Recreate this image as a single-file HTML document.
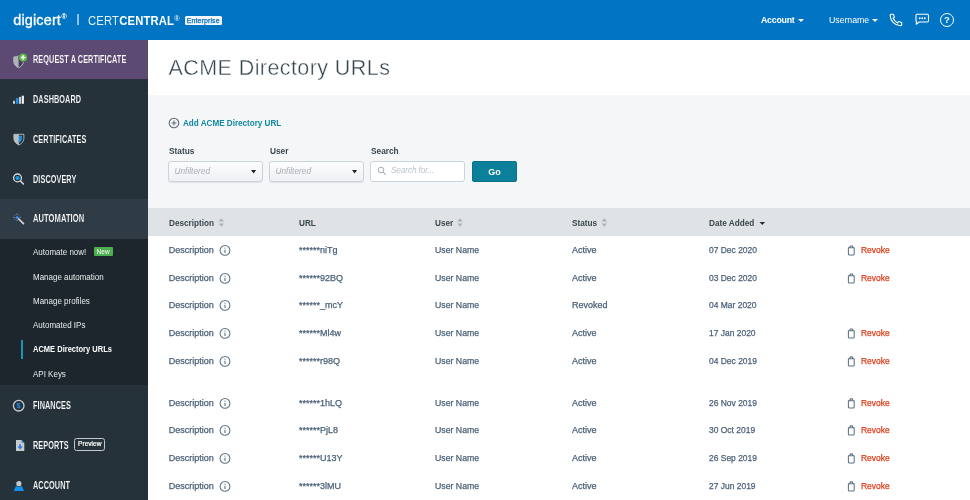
<!DOCTYPE html>
<html lang="en">
<head>
<meta charset="utf-8">
<title>ACME Directory URLs</title>
<style>
*{box-sizing:border-box;margin:0;padding:0}
html,body{-webkit-font-smoothing:antialiased;width:970px;height:500px;overflow:hidden;background:#f5f6f8;font-family:"Liberation Sans",sans-serif;}
body{position:relative}
.abs{position:absolute}
.topbar{will-change:transform;position:absolute;left:0;top:0;width:970px;height:39.500px;z-index:2;background:#0174c3;color:#fff}
.sidebar{will-change:transform;position:absolute;left:0;top:40px;width:147.700px;height:460px;background:#263239}
.req{position:absolute;left:0;top:-1px;width:147.700px;height:40.300px;background:#5c4a73}
.auto{position:absolute;left:0;top:159px;width:147.700px;height:40px;background:#2f3c45}
.sub{position:absolute;left:0;top:198.500px;width:147.700px;height:146px;background:#1c262c}
/*nav*/.nav{margin-top:1px;-webkit-text-stroke:.16px #263239;position:absolute;left:33px;color:#fff;font-size:10px;font-weight:bold;white-space:nowrap;transform-origin:0 50%;transform:scaleX(.73);line-height:12px;letter-spacing:.1px}
.subi{position:absolute;left:33px;color:#e8ecee;font-size:9px;white-space:nowrap;line-height:12px;transform-origin:0 50%;transform:scaleX(.888)}
.titlebar{will-change:transform;position:absolute;left:148px;top:40px;width:822px;height:55px;background:#fff}
h1{position:absolute;left:20.500px;top:14px;font-size:21.500px;font-weight:normal;color:#34444d;line-height:28px;white-space:nowrap;letter-spacing:.42px;-webkit-text-stroke:.4px #fff}
.main{will-change:transform;position:absolute;left:148px;top:100px;width:822px;height:400px}
.lbl{position:absolute;font-size:9px;font-weight:bold;color:#37474f;line-height:12px;white-space:nowrap;transform-origin:0 50%;transform:scaleX(.92)}
.sel{position:absolute;height:21px;top:61px;border:1px solid #ccd4db;border-radius:3px;background:linear-gradient(#fdfdfe,#eef0f3);font-size:8.300px;font-style:italic;color:#a6afb5;line-height:19.500px;padding-left:5.500px;box-shadow:0 1px 1px rgba(120,135,150,.18)}
.sel:after{content:"";position:absolute;left:81.700px;top:7.500px;width:5.800px;height:4px;background:#1d2327;clip-path:polygon(0 0,100% 0,50% 100%)}
.thead{position:absolute;left:0;top:108px;width:822px;height:28px;background:#dfe3e6}
.th{position:absolute;top:9px;font-size:9px;font-weight:bold;color:#37474f;line-height:12px;white-space:nowrap;transform-origin:0 50%;transform:scaleX(.91)}
.rows{position:absolute;left:0;top:136px;width:822px;height:264px;background:#fff}
.r{position:absolute;left:0;width:822px;height:12px;font-size:9px;color:#4b6178;line-height:12px;-webkit-text-stroke:.25px #4b6178;transform:translateY(.4px)}
.r span{position:absolute;top:0;white-space:nowrap;transform-origin:0 50%}
.c1{left:20.700px}.c2{left:151px}.c3{left:287px;transform:scaleX(.97)}.c4{left:424px}.c5{left:561px;transform:scaleX(.94)}.c6{left:712.600px;color:#dd3c18;-webkit-text-stroke:.25px #dd3c18;transform:scaleX(.94)}
</style>
</head>
<body>
<div class="topbar">
  <div class="abs" style="left:13.300px;top:10px;font-size:14.500px;line-height:20px;letter-spacing:.12px;white-space:nowrap;-webkit-text-stroke:.3px #fff">digicert<span style="font-size:7px;position:relative;top:-6.500px;left:.5px;-webkit-text-stroke:.1px #fff">®</span></div>
  <div class="abs" style="left:77.300px;top:14.300px;width:1.500px;height:11.200px;background:#8fc0e6"></div>
  <div class="abs" style="left:88px;top:11px;font-size:12.5px;line-height:20px;white-space:nowrap;letter-spacing:.2px;color:#e6f1f9;transform-origin:0 50%;transform:scaleX(.9)">CERT<b style="color:#fff">CENTRAL</b><span style="font-size:8px;position:relative;top:-4.500px;left:0;color:#fff">®</span></div>
  <div class="abs" style="left:184.600px;top:15.800px;width:37.200px;height:9px;background:#f2f7fc;border-radius:1.500px;color:#0a6fbd;font-size:7px;line-height:9px;text-align:center;letter-spacing:.12px;-webkit-text-stroke:.25px #0a6fbd">Enterprise</div>
  <div class="abs" style="left:761px;top:14px;font-size:8.8px;font-weight:bold;line-height:12px;white-space:nowrap;letter-spacing:-.25px">Account</div>
  <div class="abs" style="left:798px;top:19px;border-left:3px solid transparent;border-right:3px solid transparent;border-top:3px solid #fff"></div>
  <div class="abs" style="left:829px;top:14px;font-size:8.8px;line-height:12px;white-space:nowrap;letter-spacing:-.05px">Username</div>
  <div class="abs" style="left:872px;top:19px;border-left:3px solid transparent;border-right:3px solid transparent;border-top:3px solid #fff"></div>
  <svg class="abs" style="left:889px;top:13px" width="14" height="14" viewBox="0 0 14 14" fill="none" stroke="#fff" stroke-width="1.1" stroke-linejoin="round"><path d="M2.2 1.2 L4.4 1.2 L5.4 4.2 L4.1 5.2 C4.9 7 6.6 8.9 8.6 9.9 L9.7 8.6 L12.7 9.6 L12.7 11.8 C12.7 12.5 12.2 12.8 11.5 12.8 C5.9 12.5 1.4 8 1.2 2.4 C1.2 1.7 1.5 1.2 2.2 1.2 Z"/></svg>
  <svg class="abs" style="left:914px;top:13px" width="16" height="14" viewBox="0 0 16 14" fill="none" stroke="#fff" stroke-width="1.1" stroke-linejoin="round"><path d="M3.2 1.300 H13.300 Q14.500 1.300 14.500 2.500 V7.800 Q14.500 9 13.300 9 H5.200 L2.200 11.200 L2.600 9 Q2 8.700 2 7.800 V2.500 Q2 1.300 3.200 1.300 Z"/><circle cx="5.700" cy="5.200" r=".95" fill="#fff" stroke="none"/><circle cx="8.250" cy="5.200" r=".95" fill="#fff" stroke="none"/><circle cx="10.800" cy="5.200" r=".95" fill="#fff" stroke="none"/></svg>
  <div class="abs" style="left:940px;top:13px;width:14px;height:14px;border:1.2px solid #fff;border-radius:50%;font-size:9.5px;font-weight:bold;line-height:11.5px;text-align:center">?</div>
</div>
<div class="sidebar">
  <div class="req"></div>
  <div class="auto"></div>
  <div class="sub"></div>
  <div class="abs" style="left:20.5px;top:299.5px;width:2.2px;height:19px;background:#1496b4"></div>
  <!-- icons -->
  <svg class="abs" style="left:0;top:0" width="40" height="460" viewBox="0 40 40 460">
    <!-- request shield -->
    <path d="M13.800 57 Q16.300 56.900 18.600 56 Q20.900 56.900 23.400 57 V61.500 C23.400 64.500 21 66.700 18.600 67.700 C16.200 66.700 13.800 64.500 13.800 61.500 Z" fill="#4b3b62" stroke="#c3c7ca" stroke-width=".9"/>
    <path d="M13.800 57 Q16.300 56.900 18.600 56 V67.700 C16.200 66.700 13.800 64.500 13.800 61.500 Z" fill="#adb4b5"/>
    <circle cx="23.100" cy="57.500" r="4.700" fill="#5c4a73"/>
    <circle cx="23.100" cy="57.500" r="4" fill="#5cba47"/>
    <path d="M23.100 55.300 V59.700 M20.900 57.500 H25.300" stroke="#fff" stroke-width="1.500"/>
    <!-- dashboard -->
    <rect x="13.100" y="100.800" width="1.900" height="3" fill="#d5d8da"/>
    <rect x="15.900" y="98.100" width="2.400" height="5.700" fill="#1e90f0"/>
    <rect x="18.900" y="96.900" width="2.100" height="6.900" fill="#c8cacb"/>
    <rect x="21.700" y="95.700" width="2.200" height="8.100" fill="#f2f3f4"/>
    <!-- certificates -->
    <path d="M13.900 134.300 H23.900 V138.500 C23.900 141.600 21.400 143.900 18.900 145 C16.400 143.900 13.900 141.600 13.900 138.500 Z" fill="#263239" stroke="#b9bec1" stroke-width=".9"/>
    <path d="M13.900 134.300 H18.900 V145 C16.400 143.900 13.900 141.600 13.900 138.500 Z" fill="#b9bec1"/>
    <path d="M18.900 135.800 H21.900 V138.700 C21.900 140.600 20.500 141.900 18.900 142.700 Z" fill="#1e90f0"/>
    <!-- discovery -->
    <circle cx="17.500" cy="177.900" r="3.900" fill="none" stroke="#d9dcde" stroke-width="1.300"/>
    <circle cx="17.500" cy="177.900" r="2" fill="#169cf5"/>
    <path d="M20.500 180.900 L23.400 184" stroke="#d9dcde" stroke-width="1.500" stroke-linecap="round"/>
    <!-- automation wand -->
    <path d="M17.100 213.600 V221.200 M13.300 217.400 H20.900" stroke="#8d989f" stroke-width="1" stroke-dasharray="1.400 5"/>
    <path d="M14.400 214.700 L19.800 220.100 M19.800 214.700 L14.400 220.100" stroke="#2c7be0" stroke-width="1" stroke-dasharray="1.400 4.800"/>
    <path d="M18.300 218.600 L23.500 223.600" stroke="#d5d8da" stroke-width="1.600" stroke-linecap="round"/>
    <circle cx="17.100" cy="217.400" r="1.500" fill="#2f8cf0"/>
    <!-- finances -->
    <circle cx="18.700" cy="405.700" r="5.300" fill="#263239" stroke="#c9cdd0" stroke-width="1.300"/>
    <text x="18.700" y="408.400" font-family="Liberation Sans, sans-serif" font-size="7.500" font-weight="bold" fill="#1e90f0" text-anchor="middle">$</text>
    <!-- reports -->
    <path d="M16 440 H21.600 L24.300 442.700 V451 H16 Z" fill="#c8cbcd"/>
    <path d="M21.600 440 L24.300 442.700 H21.600 Z" fill="#1e7fe0"/>
    <path d="M19.300 444.200 H21 V446.600 H22.800 L20.150 449.400 L17.500 446.600 H19.300 Z" fill="#1e7fe0"/>
    <!-- account -->
    <path d="M15.900 486.100 H21.900 L24 490.900 H13.800 Z" fill="#0d94f2"/>
    <circle cx="18.900" cy="483.700" r="3.300" fill="#263239"/>
    <circle cx="18.900" cy="483.700" r="2.600" fill="#c5c8ca"/>
  </svg>
  <!-- labels -->
  <div class="nav" style="top:13px;-webkit-text-stroke-color:#5c4a73">REQUEST A CERTIFICATE</div>
  <div class="nav" style="top:53px">DASHBOARD</div>
  <div class="nav" style="top:93px">CERTIFICATES</div>
  <div class="nav" style="top:133px">DISCOVERY</div>
  <div class="nav" style="top:172px;transform:scaleX(.755);-webkit-text-stroke-color:#2f3c45">AUTOMATION</div>
  <div class="subi" style="top:205.5px">Automate now!</div>
  <div class="abs" style="left:93.5px;top:207.2px;width:19.2px;height:9px;background:#4caf50;border-radius:1px;color:#fff;font-size:6.500px;line-height:9px;text-align:center">New</div>
  <div class="subi" style="top:231px">Manage automation</div>
  <div class="subi" style="top:255px">Manage profiles</div>
  <div class="subi" style="top:279px">Automated IPs</div>
  <div class="subi" style="top:303px;font-weight:bold;color:#fff;transform:scaleX(.835)">ACME Directory URLs</div>
  <div class="subi" style="top:328px">API Keys</div>
  <div class="nav" style="top:359px">FINANCES</div>
  <div class="nav" style="top:399px">REPORTS</div>
  <div class="abs" style="left:74.300px;top:398.200px;width:31px;height:12.800px;border:1.300px solid #c3c9cd;border-radius:2.500px;color:#fff;font-size:6.600px;line-height:10.400px;text-align:center;-webkit-text-stroke:.2px #fff">Preview</div>
  <div class="nav" style="top:439px">ACCOUNT</div>
</div>
<div class="titlebar"><h1>ACME Directory URLs</h1></div>
<div class="main">
  <svg class="abs" style="left:19.500px;top:17px" width="12" height="12" viewBox="0 0 12 12"><circle cx="6" cy="6" r="4.800" fill="none" stroke="#5b6b78" stroke-width="1.100"/><path d="M6 3.600 V8.400 M3.600 6 H8.400" stroke="#5b6b78" stroke-width="1.100"/></svg>
  <div class="abs" style="left:34.500px;top:17px;font-size:9px;font-weight:bold;color:#0f8aa3;line-height:12px;white-space:nowrap;transform-origin:0 50%;transform:scaleX(.9)">Add ACME Directory URL</div>
  <div class="lbl" style="left:20.500px;top:45px">Status</div>
  <div class="lbl" style="left:121.500px;top:45px">User</div>
  <div class="lbl" style="left:222.500px;top:45px">Search</div>
  <div class="sel" style="left:20px;width:95px">Unfiltered</div>
  <div class="sel" style="left:121px;width:95px">Unfiltered</div>
  <div class="abs" style="left:222px;top:61px;width:95px;height:21px;border:1px solid #ccd4db;border-radius:3px;background:#fff;font-size:8.200px;font-style:italic;color:#bcc4ca;line-height:18.500px;padding-left:20px;letter-spacing:-.1px">Search for...</div>
  <svg class="abs" style="left:228.500px;top:66.300px" width="10" height="10" viewBox="0 0 10 10"><circle cx="4" cy="4" r="2.800" fill="none" stroke="#a4aeb6" stroke-width="1"/><path d="M6.200 6.200 L8.800 8.800" stroke="#a4aeb6" stroke-width="1.100"/></svg>
  <div class="abs" style="left:323.800px;top:61.300px;width:45.400px;height:21.200px;background:#0c7f9a;border:1px solid #0a7189;border-radius:2px;color:#fff;font-size:9px;font-weight:bold;line-height:20.500px;text-align:center">Go</div>
  <div class="thead">
    <div class="th" style="left:21px">Description<svg width="7" height="9" viewBox="0 0 7 9" style="position:absolute;top:1px;margin-left:4px"><path d="M0.500 3.600 L3.500 0.300 L6.500 3.600 Z M0.500 5.400 L3.500 8.700 L6.500 5.400 Z" fill="#a9b3ba"/></svg></div>
    <div class="th" style="left:151px">URL</div>
    <div class="th" style="left:287px">User<svg width="7" height="9" viewBox="0 0 7 9" style="position:absolute;top:1px;margin-left:4px"><path d="M0.500 3.600 L3.500 0.300 L6.500 3.600 Z M0.500 5.400 L3.500 8.700 L6.500 5.400 Z" fill="#a9b3ba"/></svg></div>
    <div class="th" style="left:424px">Status<svg width="7" height="9" viewBox="0 0 7 9" style="position:absolute;top:1px;margin-left:4px"><path d="M0.500 3.600 L3.500 0.300 L6.500 3.600 Z M0.500 5.400 L3.500 8.700 L6.500 5.400 Z" fill="#a9b3ba"/></svg></div>
    <div class="th" style="left:561px">Date Added<span style="position:absolute;top:4.700px;margin-left:5.500px;width:6.800px;height:3.400px;background:#263238;clip-path:polygon(0 0,100% 0,50% 100%)"></span></div>
  </div>
  <div class="rows">
    <div class="r" style="top:8px"><span class="c1">Description</span><svg class="abs" style="left:71px;top:0" width="12" height="12" viewBox="0 0 12 12"><circle cx="6" cy="6" r="4.900" fill="none" stroke="#5d7183" stroke-width="1.050"/><path d="M6 5.300 V8.600" stroke="#5d7183" stroke-width="1.100"/><circle cx="6" cy="3.700" r=".65" fill="#5d7183"/></svg><span class="c2">******niTg</span><span class="c3">User Name</span><span class="c4">Active</span><span class="c5">07 Dec 2020</span><svg class="abs" style="left:698px;top:-.4px" width="10" height="12" viewBox="0 0 10 12"><path d="M2.400 3.400 H8.200 V9.600 Q8.200 10.600 7.200 10.600 H3.400 Q2.400 10.600 2.400 9.600 Z M3.600 3.300 L4.300 1.500 H6.300 L7 3.300" fill="none" stroke="#5d7183" stroke-width="1.050" stroke-linejoin="round"/></svg><span class="c6">Revoke</span></div>
    <div class="r" style="top:36px"><span class="c1">Description</span><svg class="abs" style="left:71px;top:0" width="12" height="12" viewBox="0 0 12 12"><circle cx="6" cy="6" r="4.900" fill="none" stroke="#5d7183" stroke-width="1.050"/><path d="M6 5.300 V8.600" stroke="#5d7183" stroke-width="1.100"/><circle cx="6" cy="3.700" r=".65" fill="#5d7183"/></svg><span class="c2">******92BQ</span><span class="c3">User Name</span><span class="c4">Active</span><span class="c5">03 Dec 2020</span><svg class="abs" style="left:698px;top:-.4px" width="10" height="12" viewBox="0 0 10 12"><path d="M2.400 3.400 H8.200 V9.600 Q8.200 10.600 7.200 10.600 H3.400 Q2.400 10.600 2.400 9.600 Z M3.600 3.300 L4.300 1.500 H6.300 L7 3.300" fill="none" stroke="#5d7183" stroke-width="1.050" stroke-linejoin="round"/></svg><span class="c6">Revoke</span></div>
    <div class="r" style="top:63px"><span class="c1">Description</span><svg class="abs" style="left:71px;top:0" width="12" height="12" viewBox="0 0 12 12"><circle cx="6" cy="6" r="4.900" fill="none" stroke="#5d7183" stroke-width="1.050"/><path d="M6 5.300 V8.600" stroke="#5d7183" stroke-width="1.100"/><circle cx="6" cy="3.700" r=".65" fill="#5d7183"/></svg><span class="c2">******_mcY</span><span class="c3">User Name</span><span class="c4">Revoked</span><span class="c5">04 Mar 2020</span></div>
    <div class="r" style="top:91px"><span class="c1">Description</span><svg class="abs" style="left:71px;top:0" width="12" height="12" viewBox="0 0 12 12"><circle cx="6" cy="6" r="4.900" fill="none" stroke="#5d7183" stroke-width="1.050"/><path d="M6 5.300 V8.600" stroke="#5d7183" stroke-width="1.100"/><circle cx="6" cy="3.700" r=".65" fill="#5d7183"/></svg><span class="c2">******Ml4w</span><span class="c3">User Name</span><span class="c4">Active</span><span class="c5">17 Jan 2020</span><svg class="abs" style="left:698px;top:-.4px" width="10" height="12" viewBox="0 0 10 12"><path d="M2.400 3.400 H8.200 V9.600 Q8.200 10.600 7.200 10.600 H3.400 Q2.400 10.600 2.400 9.600 Z M3.600 3.300 L4.300 1.500 H6.300 L7 3.300" fill="none" stroke="#5d7183" stroke-width="1.050" stroke-linejoin="round"/></svg><span class="c6">Revoke</span></div>
    <div class="r" style="top:119px"><span class="c1">Description</span><svg class="abs" style="left:71px;top:0" width="12" height="12" viewBox="0 0 12 12"><circle cx="6" cy="6" r="4.900" fill="none" stroke="#5d7183" stroke-width="1.050"/><path d="M6 5.300 V8.600" stroke="#5d7183" stroke-width="1.100"/><circle cx="6" cy="3.700" r=".65" fill="#5d7183"/></svg><span class="c2">******r98Q</span><span class="c3">User Name</span><span class="c4">Active</span><span class="c5">04 Dec 2019</span><svg class="abs" style="left:698px;top:-.4px" width="10" height="12" viewBox="0 0 10 12"><path d="M2.400 3.400 H8.200 V9.600 Q8.200 10.600 7.200 10.600 H3.400 Q2.400 10.600 2.400 9.600 Z M3.600 3.300 L4.300 1.500 H6.300 L7 3.300" fill="none" stroke="#5d7183" stroke-width="1.050" stroke-linejoin="round"/></svg><span class="c6">Revoke</span></div>
    <div class="r" style="top:161px"><span class="c1">Description</span><svg class="abs" style="left:71px;top:0" width="12" height="12" viewBox="0 0 12 12"><circle cx="6" cy="6" r="4.900" fill="none" stroke="#5d7183" stroke-width="1.050"/><path d="M6 5.300 V8.600" stroke="#5d7183" stroke-width="1.100"/><circle cx="6" cy="3.700" r=".65" fill="#5d7183"/></svg><span class="c2">******1hLQ</span><span class="c3">User Name</span><span class="c4">Active</span><span class="c5">26 Nov 2019</span><svg class="abs" style="left:698px;top:-.4px" width="10" height="12" viewBox="0 0 10 12"><path d="M2.400 3.400 H8.200 V9.600 Q8.200 10.600 7.200 10.600 H3.400 Q2.400 10.600 2.400 9.600 Z M3.600 3.300 L4.300 1.500 H6.300 L7 3.300" fill="none" stroke="#5d7183" stroke-width="1.050" stroke-linejoin="round"/></svg><span class="c6">Revoke</span></div>
    <div class="r" style="top:188px"><span class="c1">Description</span><svg class="abs" style="left:71px;top:0" width="12" height="12" viewBox="0 0 12 12"><circle cx="6" cy="6" r="4.900" fill="none" stroke="#5d7183" stroke-width="1.050"/><path d="M6 5.300 V8.600" stroke="#5d7183" stroke-width="1.100"/><circle cx="6" cy="3.700" r=".65" fill="#5d7183"/></svg><span class="c2">******PjL8</span><span class="c3">User Name</span><span class="c4">Active</span><span class="c5">30 Oct 2019</span><svg class="abs" style="left:698px;top:-.4px" width="10" height="12" viewBox="0 0 10 12"><path d="M2.400 3.400 H8.200 V9.600 Q8.200 10.600 7.200 10.600 H3.400 Q2.400 10.600 2.400 9.600 Z M3.600 3.300 L4.300 1.500 H6.300 L7 3.300" fill="none" stroke="#5d7183" stroke-width="1.050" stroke-linejoin="round"/></svg><span class="c6">Revoke</span></div>
    <div class="r" style="top:216px"><span class="c1">Description</span><svg class="abs" style="left:71px;top:0" width="12" height="12" viewBox="0 0 12 12"><circle cx="6" cy="6" r="4.900" fill="none" stroke="#5d7183" stroke-width="1.050"/><path d="M6 5.300 V8.600" stroke="#5d7183" stroke-width="1.100"/><circle cx="6" cy="3.700" r=".65" fill="#5d7183"/></svg><span class="c2">******U13Y</span><span class="c3">User Name</span><span class="c4">Active</span><span class="c5">26 Sep 2019</span><svg class="abs" style="left:698px;top:-.4px" width="10" height="12" viewBox="0 0 10 12"><path d="M2.400 3.400 H8.200 V9.600 Q8.200 10.600 7.200 10.600 H3.400 Q2.400 10.600 2.400 9.600 Z M3.600 3.300 L4.300 1.500 H6.300 L7 3.300" fill="none" stroke="#5d7183" stroke-width="1.050" stroke-linejoin="round"/></svg><span class="c6">Revoke</span></div>
    <div class="r" style="top:244px"><span class="c1">Description</span><svg class="abs" style="left:71px;top:0" width="12" height="12" viewBox="0 0 12 12"><circle cx="6" cy="6" r="4.900" fill="none" stroke="#5d7183" stroke-width="1.050"/><path d="M6 5.300 V8.600" stroke="#5d7183" stroke-width="1.100"/><circle cx="6" cy="3.700" r=".65" fill="#5d7183"/></svg><span class="c2">******3lMU</span><span class="c3">User Name</span><span class="c4">Active</span><span class="c5">27 Jun 2019</span><svg class="abs" style="left:698px;top:-.4px" width="10" height="12" viewBox="0 0 10 12"><path d="M2.400 3.400 H8.200 V9.600 Q8.200 10.600 7.200 10.600 H3.400 Q2.400 10.600 2.400 9.600 Z M3.600 3.300 L4.300 1.500 H6.300 L7 3.300" fill="none" stroke="#5d7183" stroke-width="1.050" stroke-linejoin="round"/></svg><span class="c6">Revoke</span></div>
  </div>
</div>
</body>
</html>
